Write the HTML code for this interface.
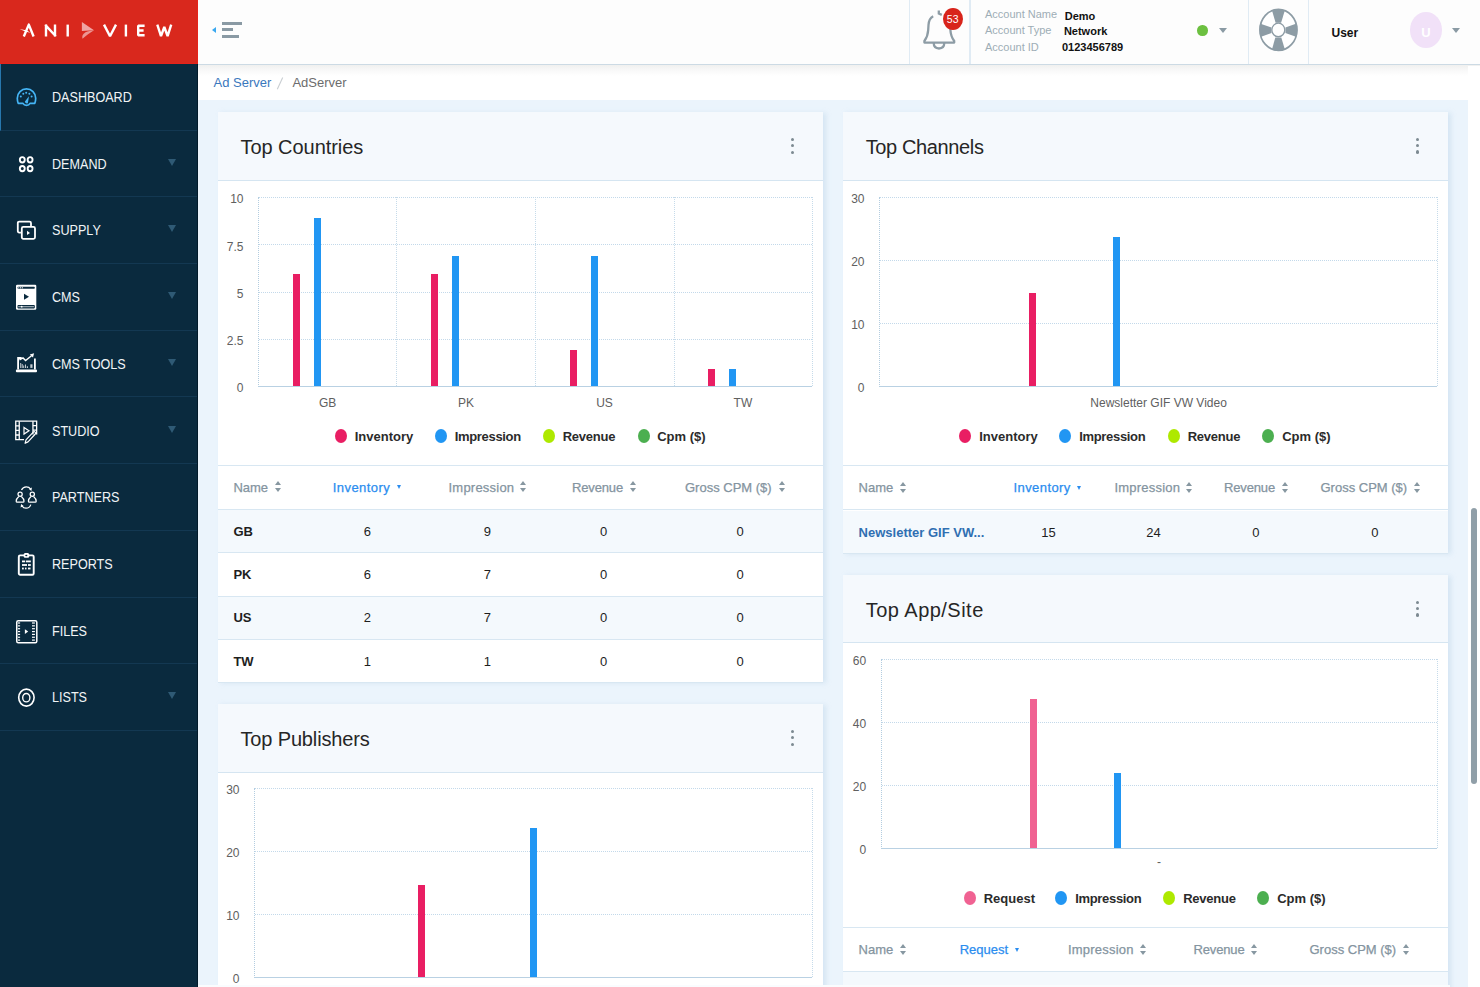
<!DOCTYPE html>
<html><head><meta charset="utf-8"><style>
*{box-sizing:border-box;margin:0;padding:0}
html,body{width:1480px;height:987px;overflow:hidden;background:#fff;font-family:"Liberation Sans",sans-serif}
.abs{position:absolute}
#logo{left:0;top:0;width:197.6px;height:64px;background:#d9281d;box-shadow:inset -1px -1px 0 #e6231a}
#side{left:0;top:64px;width:197.7px;height:923px;background:#0a2a3e;border-right:1.6px solid #021a2a}
.item{position:absolute;left:0;width:197px;height:66.7px;border-bottom:1px solid #133852}
.item.act{border-left:1px solid #2777ad}
.item .t{position:absolute;left:52.2px;top:0px;line-height:66px;font-size:14px;color:#f1f4f6;transform:scaleX(0.9);transform-origin:0 0;white-space:nowrap}
.item.act .t{left:51.2px}
.item .ic{position:absolute;left:14px;top:20px;width:26px;height:26px}
.item.act .ic{left:13px}
.item .car{position:absolute;left:168px;top:28px;width:0;height:0;border-left:4.7px solid transparent;border-right:4.7px solid transparent;border-top:7.6px solid #2f5a75}
#hdr{left:198px;top:0;width:1282px;height:65px;background:#fdfdfd;border-bottom:1.6px solid #ccdae4}
.vsep{position:absolute;top:0;width:1.3px;height:64px;background:#e0ebf4}
.ham i{position:absolute;left:23.5px;height:3.2px;background:#8a9aa4}
.hamtri{position:absolute;left:14px;top:27px;width:0;height:0;border-top:3px solid transparent;border-bottom:3px solid transparent;border-right:4.8px solid #3aa8f0}
.badge{position:absolute;left:744.8px;top:8.1px;width:19.8px;height:22px;border-radius:50%;background:#d8241b;color:#fff;font-size:10.5px;text-align:center;line-height:22px}
.acc span{position:absolute;left:787px;font-size:11px;color:#9eadb6;white-space:nowrap;line-height:13px}
.accv span{position:absolute;font-size:11px;font-weight:bold;color:#111;white-space:nowrap;line-height:13px;margin-left:720px}
.gdot{position:absolute;left:999px;top:24.8px;width:10.5px;height:11.2px;border-radius:50%;background:#6cc040}
.hcar{position:absolute;top:27.6px;width:0;height:0;border-left:4px solid transparent;border-right:4px solid transparent;border-top:5.6px solid #8a9aa4}
.user{position:absolute;left:1133.5px;top:26px;font-size:12px;font-weight:bold;color:#111;line-height:15px}
.avatar{position:absolute;left:1212px;top:12px;width:32px;height:35.7px;border-radius:50%;background:#f1e1f8;color:#fff;font-size:13px;font-weight:bold;text-align:center;line-height:36px;padding-top:2.5px}
#crumb{left:198px;top:65px;width:1282px;height:35px;background:#fff}
#crumb .shadow{position:absolute;left:0;top:0;width:100%;height:11px;background:linear-gradient(#f0f0ef,#f8f8f8 45%,#fff)}
.bc1,.bcs,.bc2{position:absolute;top:10px;font-size:13px;line-height:15px;white-space:nowrap}
.bc1{left:15.6px;color:#3a78bd}
.bcs{left:79px;color:#c9cfd4;font-size:14px;top:10px}
.bc2{left:94.4px;color:#6c6c6c}
#content{left:198px;top:100px;width:1270px;height:887px;background:#ebf4fc}
#sbtrack{left:1468px;top:66px;width:12px;height:923px;background:#fff}
#sbthumb{left:1470.9px;top:507.6px;width:5.8px;height:276.5px;border-radius:3px;background:#909fa8}
.card{position:absolute;background:#fff;box-shadow:3px 1px 5px rgba(170,200,225,.35)}
.ch{position:absolute;left:0;top:0;width:100%;background:#f5f9fd;border-bottom:1px solid #d5e5f1}
.ch .tt{position:absolute;left:23px;font-size:20px;line-height:23px;color:#262626;white-space:nowrap}
.dots{position:absolute;width:3px}
.dots i{display:block;width:3.2px;height:3.2px;border-radius:50%;background:#7d8a92;margin-bottom:3.2px}
.lbl{position:absolute;font-size:12px;line-height:15px;color:#606060;text-align:right}
.xl{position:absolute;font-size:12px;line-height:15px;color:#606060;text-align:center}
.plot{position:absolute;border-left:1px dotted #b3cde0;border-bottom:1px solid #b9d1e3}
.gl{position:absolute;left:0;width:100%;height:0;border-top:1px dotted #c3d9ea}
.vl{position:absolute;top:0;height:100%;width:0;border-left:1px dotted #c6dbea}
.bar{position:absolute;width:7px}
.leg{position:absolute;font-size:13px;font-weight:bold;color:#2b2b2b;white-space:nowrap;height:14px}
.leg .d{position:absolute;width:12px;height:14px;border-radius:50%}
.leg .lt{position:absolute;left:19.7px;top:0;line-height:15px}
.th{position:absolute;left:0;width:100%;border-top:1px solid #d8e7f2;border-bottom:1px solid #d8e7f2;background:#fff}
.th span,.tr span{position:absolute;font-size:13px;line-height:16px;white-space:nowrap}
.th span{color:#8494a0;-webkit-text-stroke:0.25px #8494a0}
.th span.act{color:#2b8def;-webkit-text-stroke:0.25px #2b8def}
.tr{position:absolute;left:0;width:100%;border-bottom:1px solid #d8e7f2;background:#fff}
.tr.alt{background:#f4f9fd}
.tr span{color:#1e1e1e}
.tr span.b{font-weight:bold}
.tr span.lnk{color:#2f6fb2}
.sup,.sdn{position:absolute;width:0;height:0;border-left:3px solid transparent;border-right:3px solid transparent}
.sup{border-bottom:4.5px solid #8797a1}
.sdn{border-top:4.5px solid #8797a1}
.sdn.act{border-top-color:#2b8def;border-left-width:2.7px;border-right-width:2.7px;border-top-width:4.5px}

</style></head><body>
<div id="logo" class="abs"><svg width="197" height="64" viewBox="0 0 197 64" style="position:absolute;left:0;top:0">
<g fill="none" stroke="#fff" stroke-width="2.4" stroke-linejoin="bevel" stroke-linecap="butt">
<path d="M23.8 36.5 L28.8 24.6 L33.6 36.5" stroke-linejoin="round"/>
<path d="M46 36.5 V24.6 M45.2 24.9 L55.8 36.2 M55 36.5 V24.6"/>
<path d="M67.7 24.6 V36.5"/>
<path d="M104 24.6 L110 36.3 L116 24.6"/>
<path d="M125.9 24.6 V36.5"/>
<path d="M144.6 25.8 H138.2 V35.3 H144.6 M138.2 30.5 H143.6"/>
<path d="M157.3 24.6 L161 36.2 L164.3 27 L167.6 36.2 L171.2 24.6"/>
</g>
<path d="M19.6 29.1 L27 30.4 L30.4 32.8 L26 31.8 Z" fill="#fff"/>
<path d="M81.9 21.9 L94 30.2 L81.9 31.1 Z" fill="#f0a4a2"/>
<path d="M94 30.2 C90 33 86 35.5 82.5 38.8 C81.8 36.5 82.5 34 85.5 32.2 C88 31 91 30.4 94 30.2 Z" fill="#ec9592"/>
</svg>
</div>
<div id="side" class="abs">
<div class="item act" style="top:0.00px">
<div class="ic"><svg width="26" height="26" viewBox="0 0 26 26" style="position:absolute;left:0;top:0"><path d="M4.2 19.3 C3.5 17.5 3.3 16 3.3 14.3 C3.3 9 7.4 4.9 12.5 4.9 C17.6 4.9 21.7 9 21.7 14.3 C21.7 16 21.5 17.5 20.8 19.3 H16 C15.3 20.6 14 21.3 12.5 21.3 C11 21.3 9.7 20.6 9 19.3 Z" fill="none" stroke="#45b5f6" stroke-width="1.7" stroke-linejoin="round"/><g fill="#45b5f6"><circle cx="6.8" cy="12.4" r="1"/><circle cx="9.3" cy="9.7" r="1"/><circle cx="12.2" cy="8.7" r="1"/><circle cx="15.4" cy="9.7" r="1"/><circle cx="17.6" cy="12.4" r="1"/><path d="M10.9 17.6 L15 12.2 L13.9 18.9 C13.3 20 11.1 19.6 10.9 17.6 Z"/></g></svg></div>
<div class="t">DASHBOARD</div>
</div>
<div class="item" style="top:66.70px">
<div class="ic"><svg width="26" height="26" viewBox="0 0 26 26" style="position:absolute;left:0;top:0"><g fill="none" stroke="#fff" stroke-width="1.9"><ellipse cx="8.3" cy="8.8" rx="2.45" ry="2.65"/><ellipse cx="16.1" cy="8.8" rx="2.45" ry="2.65"/><ellipse cx="8.3" cy="17.6" rx="2.45" ry="2.65"/><ellipse cx="16.1" cy="17.6" rx="2.45" ry="2.65"/></g></svg></div>
<div class="t">DEMAND</div>
<div class="car"></div>
</div>
<div class="item" style="top:133.40px">
<div class="ic"><svg width="26" height="26" viewBox="0 0 26 26" style="position:absolute;left:0;top:0"><g fill="none" stroke="#fff" stroke-width="1.8" stroke-linejoin="round"><path d="M6.9 15.6 H5.3 Q3.8 15.6 3.8 14.1 V6.1 Q3.8 4.6 5.3 4.6 H15.5 Q17 4.6 17 6.1 V9.9"/><rect x="7.8" y="9.9" width="13.2" height="11.9" rx="1.5"/></g><path d="M13 13.8 L16 15.9 L13 18 Z" fill="#fff"/></svg></div>
<div class="t">SUPPLY</div>
<div class="car"></div>
</div>
<div class="item" style="top:200.10px">
<div class="ic"><svg width="26" height="28" viewBox="0 0 26 28" style="position:absolute;left:0;top:0"><rect x="2" y="0.8" width="20.3" height="25" rx="1.2" fill="#fff"/><g fill="#0a2a3e"><rect x="3.5" y="2.8" width="17.3" height="2" rx="0.8"/><path d="M10 9.8 L15 12.8 L10 15.8 Z"/><rect x="3.5" y="21.1" width="17.3" height="3.3" rx="0.8"/></g><g fill="#fff"><rect x="4.2" y="3.3" width="1.1" height="1"/><rect x="6" y="3.3" width="1.1" height="1"/><rect x="7.8" y="3.3" width="1.1" height="1"/><rect x="4.2" y="22.3" width="15.7" height="0.9" opacity="0.8"/><circle cx="7.7" cy="22.7" r="0.9"/></g></svg></div>
<div class="t">CMS</div>
<div class="car"></div>
</div>
<div class="item" style="top:266.80px">
<div class="ic"><svg width="26" height="26" viewBox="0 0 26 26" style="position:absolute;left:0;top:0"><g fill="none" stroke="#fff" stroke-width="1.8"><path d="M4.1 18.6 V7 H7.7"/><path d="M20.9 18.6 V7.5"/></g><rect x="1.9" y="18.6" width="21.1" height="2.6" rx="1" fill="#fff"/><path d="M5.5 8.8 L9 6.9 L11.6 9.5 L17.5 4.8" fill="none" stroke="#fff" stroke-width="1.4"/><path d="M20.1 2.2 L15.8 3.4 L19 6.6 Z" fill="#fff"/><g fill="#fff" opacity="0.75"><rect x="6.2" y="12" width="1" height="5"/><rect x="7.7" y="13" width="1" height="4"/><rect x="9.2" y="14.5" width="1" height="2.5"/><rect x="11" y="13.5" width="1" height="3.5"/><rect x="12.8" y="15.3" width="1.2" height="1.7"/><rect x="16.3" y="13.3" width="2.2" height="3.6"/></g></svg></div>
<div class="t">CMS TOOLS</div>
<div class="car"></div>
</div>
<div class="item" style="top:333.50px">
<div class="ic"><svg width="26" height="28" viewBox="0 0 26 28" style="position:absolute;left:0;top:0"><g fill="none" stroke="#fff" stroke-width="1.3"><path d="M10 21.65 H1.75 V3.15 H22.65 V16.5"/><path d="M5.25 3.15 V21.65 M18.95 3.15 V16.5"/><path d="M1.75 7.8 H5.25 M1.75 12.4 H5.25 M1.75 17 H5.25 M18.95 7.6 H22.65 M18.95 12.1 H22.65"/><path d="M10 9.4 L15 12.75 L10 16.1 Z" stroke-width="1.2"/><path d="M11.1 25.3 L12 21.9 L19.3 14.2 C20.5 13 22.3 14.6 21.3 16 L14 23.9 Z" stroke-width="1.2" stroke-linejoin="round"/></g></svg></div>
<div class="t">STUDIO</div>
<div class="car"></div>
</div>
<div class="item" style="top:400.20px">
<div class="ic"><svg width="26" height="28" viewBox="0 0 26 28" style="position:absolute;left:0;top:0"><g fill="none" stroke="#fff" stroke-width="1.25"><circle cx="6.1" cy="10.3" r="2.1"/><circle cx="18.3" cy="10.3" r="2.1"/><path d="M4.8 12.4 C3.5 13.5 2.2 15.5 2.2 17.2 C2.2 17.9 2.6 18.2 3.2 18.2 H9 C9.6 18.2 10 17.9 10 17.2 C10 15.5 8.7 13.5 7.4 12.4"/><path d="M17 12.4 C15.7 13.5 14.4 15.5 14.4 17.2 C14.4 17.9 14.8 18.2 15.4 18.2 H21.2 C21.8 18.2 22.2 17.9 22.2 17.2 C22.2 15.5 20.9 13.5 19.6 12.4"/><path d="M7.5 6.1 C8.5 3.8 10.5 2.9 12.3 2.9 C14.2 2.9 15.6 3.6 16.4 4.9"/><path d="M16.8 20.6 C16 22.9 14.2 24.2 12 24.2 C10.2 24.2 8.9 23.4 8.1 22"/></g><path d="M14.9 4.9 L17.9 3.4 L17.4 6.9 Z M9.6 22 L6.6 23.5 L7.1 20 Z" fill="#fff"/></svg></div>
<div class="t">PARTNERS</div>
</div>
<div class="item" style="top:466.90px">
<div class="ic"><svg width="26" height="26" viewBox="0 0 26 26" style="position:absolute;left:0;top:0"><rect x="4.8" y="4.4" width="14.9" height="19.3" rx="1.3" fill="none" stroke="#fff" stroke-width="1.9"/><rect x="9.7" y="2.1" width="5.5" height="4.6" rx="1.5" fill="#fff"/><ellipse cx="12.3" cy="4.5" rx="1.1" ry="0.7" fill="#0a2a3e"/><g fill="#fff"><rect x="8" y="9.5" width="3.2" height="1.8"/><rect x="12" y="9.5" width="4.8" height="1.8"/><rect x="8" y="13.1" width="5" height="1.8"/><rect x="14" y="13.1" width="2.8" height="1.8"/><rect x="8" y="16.6" width="1.8" height="1.8"/><rect x="11" y="16.6" width="1.5" height="1.8"/><rect x="14" y="16.6" width="2.5" height="1.8"/></g></svg></div>
<div class="t">REPORTS</div>
</div>
<div class="item" style="top:533.60px">
<div class="ic"><svg width="26" height="28" viewBox="0 0 26 28" style="position:absolute;left:0;top:0"><rect x="2.75" y="2.85" width="20.05" height="21.9" rx="1.5" fill="none" stroke="#fff" stroke-width="1.5"/><g fill="#fff"><rect x="3.9" y="4.4" width="2.2" height="1.2"/><rect x="3.9" y="7.25" width="2.2" height="1.2"/><rect x="3.9" y="10.1" width="2.2" height="1.2"/><rect x="3.9" y="12.95" width="2.2" height="1.2"/><rect x="3.9" y="15.8" width="2.2" height="1.2"/><rect x="3.9" y="18.65" width="2.2" height="1.2"/><rect x="3.9" y="21.5" width="2.2" height="1.2"/><rect x="18" y="4.4" width="2.9" height="1.2"/><rect x="18" y="7.25" width="2.9" height="1.2"/><rect x="18" y="10.1" width="2.9" height="1.2"/><rect x="18" y="12.95" width="2.9" height="1.2"/><rect x="18" y="15.8" width="2.9" height="1.2"/><rect x="18" y="18.65" width="2.9" height="1.2"/><rect x="18" y="21.5" width="2.9" height="1.2"/><path d="M10.9 11.2 L14.2 13.55 L10.9 15.9 Z"/></g></svg></div>
<div class="t">FILES</div>
</div>
<div class="item" style="top:600.30px">
<div class="ic"><svg width="26" height="26" viewBox="0 0 26 26" style="position:absolute;left:0;top:0"><g fill="none" stroke="#fff"><ellipse cx="12.4" cy="13.6" rx="7.7" ry="8.5" stroke-width="1.6"/><ellipse cx="12.3" cy="13.7" rx="3.6" ry="4.2" stroke-width="1.4"/></g></svg>
</div>
<div class="t">LISTS</div>
<div class="car"></div>
</div>
</div>
<div id="hdr" class="abs"><div class="ham"><i style="top:21.5px;width:20px"></i><i style="top:28.3px;width:11.8px"></i><i style="top:35px;width:17px"></i></div>
<div class="hamtri"></div>
<div class="vsep" style="left:710.9px"></div>
<div class="vsep" style="left:771.3px"></div>
<div class="vsep" style="left:1049.6px"></div>
<div class="vsep" style="left:1109.9px"></div>
<svg class="abs" style="left:720px;top:4px" width="48" height="50" viewBox="0 0 48 50">
<g fill="none" stroke="#8d9ca5" stroke-width="2.3">
<path d="M15.2 12.2 C12.5 13.5 10.8 16.5 10.5 21 L10.2 26 C9.9 31 8.8 33.8 6.4 37 V38.6 H36.2 V37 C33.8 33.8 32.7 31 32.4 26 L32.2 23" stroke-linejoin="round"/>
<path d="M15.7 38.6 C15.7 42.5 18 44.5 21 44.5 C24 44.5 26.3 42.5 26.3 38.6"/>
<path d="M20.8 6.6 V9.6 L23.8 10.9"/>
</g></svg>
<div class="badge">53</div>
<div class="acc"><span style="top:8px">Account Name</span><span style="top:24.2px">Account Type</span><span style="top:40.7px">Account ID</span></div>
<div class="accv"><span style="top:9.8px;left:146.7px">Demo</span><span style="top:24.5px;left:145.9px">Network</span><span style="top:40.5px;left:144px">0123456789</span></div>
<div class="gdot"></div>
<div class="hcar" style="left:1021.3px"></div>
<svg class="abs" style="left:1057px;top:5px" width="48" height="50" viewBox="0 0 48 50">
<defs><clipPath id="bc"><ellipse cx="23.45" cy="24.9" rx="19" ry="21"/></clipPath></defs>
<ellipse cx="23.45" cy="24.9" rx="18.5" ry="20.55" fill="#fff" stroke="#8d9ca5" stroke-width="1.7"/>
<g clip-path="url(#bc)" fill="#8d9ca5">
<path d="M16.3 3 L30.6 3 L26.1 17.8 L20.6 17.8 Z"/>
<path d="M16.3 47 L30.6 47 L26.3 32.5 L20.3 32.5 Z"/>
<path d="M3 17.8 L3 32.8 L16.5 28.1 L16.5 22.5 Z"/>
<path d="M43.9 17.8 L43.9 32.8 L30.4 28.1 L30.4 22.5 Z"/>
</g>
<ellipse cx="23.3" cy="24.95" rx="6.45" ry="6.8" fill="#fff" stroke="#8d9ca5" stroke-width="1.3"/>
</svg>
<div class="user">User</div>
<div class="avatar">U</div>
<div class="hcar" style="left:1254px"></div>
</div>
<div id="crumb" class="abs"><div class="shadow"></div><span class="bc1">Ad Server</span><svg class="abs" style="left:0;top:-1px" width="100" height="36"><path d="M79.3 25.2 L84.7 13.4" stroke="#c9ced2" stroke-width="1.1"/></svg><span class="bc2">AdServer</span></div>
<div id="content" class="abs"></div>
<div id="sbtrack" class="abs"></div><div id="sbthumb" class="abs"></div>
<div class="card" style="left:217.5px;top:111.5px;width:605.5px;height:570.5px">
<div class="ch" style="height:69.6px"><div class="tt" style="top:24.199999999999996px;letter-spacing:-0.05px">Top Countries</div><div class="dots" style="left:573.5px;top:26.299999999999997px"><i></i><i></i><i></i></div></div>
<div class="plot" style="left:40.10000000000002px;top:85.69999999999999px;width:554.9px;height:190.2px">
<div class="gl" style="top:0.00px"></div>
<div class="gl" style="top:47.30px"></div>
<div class="gl" style="top:94.60px"></div>
<div class="gl" style="top:141.90px"></div>
<div class="vl" style="left:553.9px"></div>
<div class="vl" style="left:137.72px"></div>
<div class="vl" style="left:276.45px"></div>
<div class="vl" style="left:415.17px"></div>
<div class="bar" style="left:34.40px;top:77.20px;height:112.00px;background:#e91e63"></div>
<div class="bar" style="left:55.40px;top:20.60px;height:168.60px;background:#2196f3"></div>
<div class="bar" style="left:172.60px;top:77.20px;height:112.00px;background:#e91e63"></div>
<div class="bar" style="left:193.60px;top:58.40px;height:130.80px;background:#2196f3"></div>
<div class="bar" style="left:311.00px;top:152.60px;height:36.60px;background:#e91e63"></div>
<div class="bar" style="left:332.00px;top:58.40px;height:130.80px;background:#2196f3"></div>
<div class="bar" style="left:449.40px;top:171.40px;height:17.80px;background:#e91e63"></div>
<div class="bar" style="left:470.40px;top:171.40px;height:17.80px;background:#2196f3"></div>
</div>
<div class="lbl" style="left:-14.0px;width:40px;top:80.70px">10</div>
<div class="lbl" style="left:-14.0px;width:40px;top:128.00px">7.5</div>
<div class="lbl" style="left:-14.0px;width:40px;top:175.30px">5</div>
<div class="lbl" style="left:-14.0px;width:40px;top:222.60px">2.5</div>
<div class="lbl" style="left:-14.0px;width:40px;top:269.90px">0</div>
<div class="xl" style="left:10.20px;width:200px;top:284.5px">GB</div>
<div class="xl" style="left:148.60px;width:200px;top:284.5px">PK</div>
<div class="xl" style="left:287.00px;width:200px;top:284.5px">US</div>
<div class="xl" style="left:425.40px;width:200px;top:284.5px">TW</div>
<div class="leg" style="left:117.5px;top:317.3px"><span class="d" style="background:#e91e63;left:0;top:0"></span><span class="lt" style="">Inventory</span></div>
<div class="leg" style="left:217.5px;top:317.3px"><span class="d" style="background:#2196f3;left:0;top:0"></span><span class="lt" style=";letter-spacing:-0.32px">Impression</span></div>
<div class="leg" style="left:325.5px;top:317.3px"><span class="d" style="background:#aee900;left:0;top:0"></span><span class="lt" style=";letter-spacing:-0.25px">Revenue</span></div>
<div class="leg" style="left:420.0px;top:317.3px"><span class="d" style="background:#4caf50;left:0;top:0"></span><span class="lt" style="">Cpm ($)</span></div>
<div class="th" style="top:353.3px;height:45.2px">
<span class="" style="left:15.900000000000006px;top:14.100000000000001px;letter-spacing:0px">Name</span>
<div class="sup" style="left:57.5px;top:15.600000000000001px"></div><div class="sdn" style="left:57.5px;top:22.6px"></div>
<span class="act" style="left:115.30000000000001px;top:14.100000000000001px;letter-spacing:0.42px">Inventory</span>
<div class="sdn act" style="left:179.10000000000002px;top:19.6px"></div>
<span class="" style="left:231.0px;top:14.100000000000001px;letter-spacing:0.22px">Impression</span>
<div class="sup" style="left:302.5px;top:15.600000000000001px"></div><div class="sdn" style="left:302.5px;top:22.6px"></div>
<span class="" style="left:354.5px;top:14.100000000000001px;letter-spacing:-0.15px">Revenue</span>
<div class="sup" style="left:412.5px;top:15.600000000000001px"></div><div class="sdn" style="left:412.5px;top:22.6px"></div>
<span class="" style="left:467.5px;top:14.100000000000001px;letter-spacing:0px">Gross CPM ($)</span>
<div class="sup" style="left:561.5px;top:15.600000000000001px"></div><div class="sdn" style="left:561.5px;top:22.6px"></div>
</div>
<div class="tr alt" style="top:398.50px;height:43.3px">
<span class="b" style="left:15.900000000000006px;top:13.849999999999998px">GB</span>
<span class="" style="left:99.89999999999998px;width:100px;text-align:center;top:13.849999999999998px">6</span>
<span class="" style="left:219.89999999999998px;width:100px;text-align:center;top:13.849999999999998px">9</span>
<span class="" style="left:336.0px;width:100px;text-align:center;top:13.849999999999998px">0</span>
<span class="" style="left:472.5px;width:100px;text-align:center;top:13.849999999999998px">0</span>
</div>
<div class="tr" style="top:441.80px;height:43.3px">
<span class="b" style="left:15.900000000000006px;top:13.849999999999998px">PK</span>
<span class="" style="left:99.89999999999998px;width:100px;text-align:center;top:13.849999999999998px">6</span>
<span class="" style="left:219.89999999999998px;width:100px;text-align:center;top:13.849999999999998px">7</span>
<span class="" style="left:336.0px;width:100px;text-align:center;top:13.849999999999998px">0</span>
<span class="" style="left:472.5px;width:100px;text-align:center;top:13.849999999999998px">0</span>
</div>
<div class="tr alt" style="top:485.10px;height:43.3px">
<span class="b" style="left:15.900000000000006px;top:13.849999999999998px">US</span>
<span class="" style="left:99.89999999999998px;width:100px;text-align:center;top:13.849999999999998px">2</span>
<span class="" style="left:219.89999999999998px;width:100px;text-align:center;top:13.849999999999998px">7</span>
<span class="" style="left:336.0px;width:100px;text-align:center;top:13.849999999999998px">0</span>
<span class="" style="left:472.5px;width:100px;text-align:center;top:13.849999999999998px">0</span>
</div>
<div class="tr" style="top:528.40px;height:43.3px">
<span class="b" style="left:15.900000000000006px;top:13.849999999999998px">TW</span>
<span class="" style="left:99.89999999999998px;width:100px;text-align:center;top:13.849999999999998px">1</span>
<span class="" style="left:219.89999999999998px;width:100px;text-align:center;top:13.849999999999998px">1</span>
<span class="" style="left:336.0px;width:100px;text-align:center;top:13.849999999999998px">0</span>
<span class="" style="left:472.5px;width:100px;text-align:center;top:13.849999999999998px">0</span>
</div>
</div>
<div class="card" style="left:217.5px;top:704.1px;width:605.5px;height:300px">
<div class="ch" style="height:68.6px"><div class="tt" style="top:23.699999999999996px;letter-spacing:-0.15px">Top Publishers</div><div class="dots" style="left:573.5px;top:25.799999999999997px"><i></i><i></i><i></i></div></div>
<div class="plot" style="left:36.30000000000001px;top:84.29999999999995px;width:558.7px;height:190.0px">
<div class="gl" style="top:0.00px"></div>
<div class="gl" style="top:63.00px"></div>
<div class="gl" style="top:126.00px"></div>
<div class="vl" style="left:557.7px"></div>
<div class="bar" style="left:163.50px;top:96.60px;height:92.40px;background:#e91e63"></div>
<div class="bar" style="left:274.90px;top:39.70px;height:149.30px;background:#2196f3"></div>
</div>
<div class="lbl" style="left:-18.0px;width:40px;top:79.30px">30</div>
<div class="lbl" style="left:-18.0px;width:40px;top:142.30px">20</div>
<div class="lbl" style="left:-18.0px;width:40px;top:205.30px">10</div>
<div class="lbl" style="left:-18.0px;width:40px;top:268.30px">0</div>
</div>
<div class="card" style="left:842.7px;top:111.5px;width:605.5px;height:441.70000000000005px">
<div class="ch" style="height:69.4px"><div class="tt" style="top:24.1px;letter-spacing:-0.37px">Top Channels</div><div class="dots" style="left:573.5px;top:26.200000000000003px"><i></i><i></i><i></i></div></div>
<div class="plot" style="left:36.299999999999955px;top:85.6px;width:558.5px;height:190.00000000000003px">
<div class="gl" style="top:0.00px"></div>
<div class="gl" style="top:63.00px"></div>
<div class="gl" style="top:126.00px"></div>
<div class="vl" style="left:557.5px"></div>
<div class="bar" style="left:149.30px;top:96.20px;height:92.80px;background:#e91e63"></div>
<div class="bar" style="left:232.80px;top:39.50px;height:149.50px;background:#2196f3"></div>
</div>
<div class="lbl" style="left:-18.200000000000045px;width:40px;top:80.60px">30</div>
<div class="lbl" style="left:-18.200000000000045px;width:40px;top:143.60px">20</div>
<div class="lbl" style="left:-18.200000000000045px;width:40px;top:206.60px">10</div>
<div class="lbl" style="left:-18.200000000000045px;width:40px;top:269.60px">0</div>
<div class="xl" style="left:215.90px;width:200px;top:284.5px">Newsletter GIF VW Video</div>
<div class="leg" style="left:116.79999999999995px;top:317.3px"><span class="d" style="background:#e91e63;left:0;top:0"></span><span class="lt" style="">Inventory</span></div>
<div class="leg" style="left:216.79999999999995px;top:317.3px"><span class="d" style="background:#2196f3;left:0;top:0"></span><span class="lt" style=";letter-spacing:-0.32px">Impression</span></div>
<div class="leg" style="left:325.29999999999995px;top:317.3px"><span class="d" style="background:#aee900;left:0;top:0"></span><span class="lt" style=";letter-spacing:-0.25px">Revenue</span></div>
<div class="leg" style="left:419.79999999999995px;top:317.3px"><span class="d" style="background:#4caf50;left:0;top:0"></span><span class="lt" style="">Cpm ($)</span></div>
<div class="th" style="top:353.8px;height:45.2px">
<span class="" style="left:15.899999999999977px;top:14.100000000000001px;letter-spacing:0px">Name</span>
<div class="sup" style="left:57.299999999999955px;top:15.600000000000001px"></div><div class="sdn" style="left:57.299999999999955px;top:22.6px"></div>
<span class="act" style="left:170.79999999999995px;top:14.100000000000001px;letter-spacing:0.42px">Inventory</span>
<div class="sdn act" style="left:234.79999999999995px;top:19.6px"></div>
<span class="" style="left:271.79999999999995px;top:14.100000000000001px;letter-spacing:0.22px">Impression</span>
<div class="sup" style="left:343.29999999999995px;top:15.600000000000001px"></div><div class="sdn" style="left:343.29999999999995px;top:22.6px"></div>
<span class="" style="left:381.29999999999995px;top:14.100000000000001px;letter-spacing:-0.15px">Revenue</span>
<div class="sup" style="left:439.29999999999995px;top:15.600000000000001px"></div><div class="sdn" style="left:439.29999999999995px;top:22.6px"></div>
<span class="" style="left:477.79999999999995px;top:14.100000000000001px;letter-spacing:0px">Gross CPM ($)</span>
<div class="sup" style="left:571.3px;top:15.600000000000001px"></div><div class="sdn" style="left:571.3px;top:22.6px"></div>
</div>
<div class="tr alt" style="top:399.00px;height:43.7px">
<span class="b lnk" style="left:15.899999999999977px;top:14.05px">Newsletter GIF VW...</span>
<span class="" style="left:155.79999999999995px;width:100px;text-align:center;top:14.05px">15</span>
<span class="" style="left:260.79999999999995px;width:100px;text-align:center;top:14.05px">24</span>
<span class="" style="left:363.29999999999995px;width:100px;text-align:center;top:14.05px">0</span>
<span class="" style="left:482.29999999999995px;width:100px;text-align:center;top:14.05px">0</span>
</div>
</div>
<div class="card" style="left:842.7px;top:575.1px;width:605.5px;height:420px">
<div class="ch" style="height:68.3px"><div class="tt" style="top:23.549999999999997px;letter-spacing:0.48px">Top App/Site</div><div class="dots" style="left:573.5px;top:25.65px"><i></i><i></i><i></i></div></div>
<div class="plot" style="left:38.5px;top:83.89999999999998px;width:556.3px;height:189.89999999999998px">
<div class="gl" style="top:0.00px"></div>
<div class="gl" style="top:62.97px"></div>
<div class="gl" style="top:125.93px"></div>
<div class="vl" style="left:555.3px"></div>
<div class="bar" style="left:148.10px;top:39.80px;height:149.10px;background:#f06292"></div>
<div class="bar" style="left:231.50px;top:114.20px;height:74.70px;background:#2196f3"></div>
</div>
<div class="lbl" style="left:-16.5px;width:40px;top:78.90px">60</div>
<div class="lbl" style="left:-16.5px;width:40px;top:141.87px">40</div>
<div class="lbl" style="left:-16.5px;width:40px;top:204.83px">20</div>
<div class="lbl" style="left:-16.5px;width:40px;top:267.80px">0</div>
<div class="xl" style="left:216.30px;width:200px;top:279.9px">-</div>
<div class="leg" style="left:121.29999999999995px;top:315.79999999999995px"><span class="d" style="background:#f06292;left:0;top:0"></span><span class="lt" style="">Request</span></div>
<div class="leg" style="left:212.79999999999995px;top:315.79999999999995px"><span class="d" style="background:#2196f3;left:0;top:0"></span><span class="lt" style=";letter-spacing:-0.32px">Impression</span></div>
<div class="leg" style="left:320.79999999999995px;top:315.79999999999995px"><span class="d" style="background:#aee900;left:0;top:0"></span><span class="lt" style=";letter-spacing:-0.25px">Revenue</span></div>
<div class="leg" style="left:414.79999999999995px;top:315.79999999999995px"><span class="d" style="background:#4caf50;left:0;top:0"></span><span class="lt" style="">Cpm ($)</span></div>
<div class="th" style="top:351.9px;height:45.2px">
<span class="" style="left:15.899999999999977px;top:14.100000000000001px;letter-spacing:0px">Name</span>
<div class="sup" style="left:57.299999999999955px;top:15.600000000000001px"></div><div class="sdn" style="left:57.299999999999955px;top:22.6px"></div>
<span class="act" style="left:117.0px;top:14.100000000000001px;letter-spacing:0px">Request</span>
<div class="sdn act" style="left:172.69999999999993px;top:19.6px"></div>
<span class="" style="left:225.29999999999995px;top:14.100000000000001px;letter-spacing:0.22px">Impression</span>
<div class="sup" style="left:297.29999999999995px;top:15.600000000000001px"></div><div class="sdn" style="left:297.29999999999995px;top:22.6px"></div>
<span class="" style="left:350.79999999999995px;top:14.100000000000001px;letter-spacing:-0.15px">Revenue</span>
<div class="sup" style="left:408.29999999999995px;top:15.600000000000001px"></div><div class="sdn" style="left:408.29999999999995px;top:22.6px"></div>
<span class="" style="left:466.79999999999995px;top:14.100000000000001px;letter-spacing:0px">Gross CPM ($)</span>
<div class="sup" style="left:560.3px;top:15.600000000000001px"></div><div class="sdn" style="left:560.3px;top:22.6px"></div>
</div>
<div class="tr alt" style="top:397.10px;height:43.3px">
<span class="b" style="left:15.899999999999977px;top:13.849999999999998px"></span>
</div>
</div>
<div class="abs" style="left:198px;top:985.4px;width:1252px;height:2px;background:#fafcfe"></div>
</body></html>
